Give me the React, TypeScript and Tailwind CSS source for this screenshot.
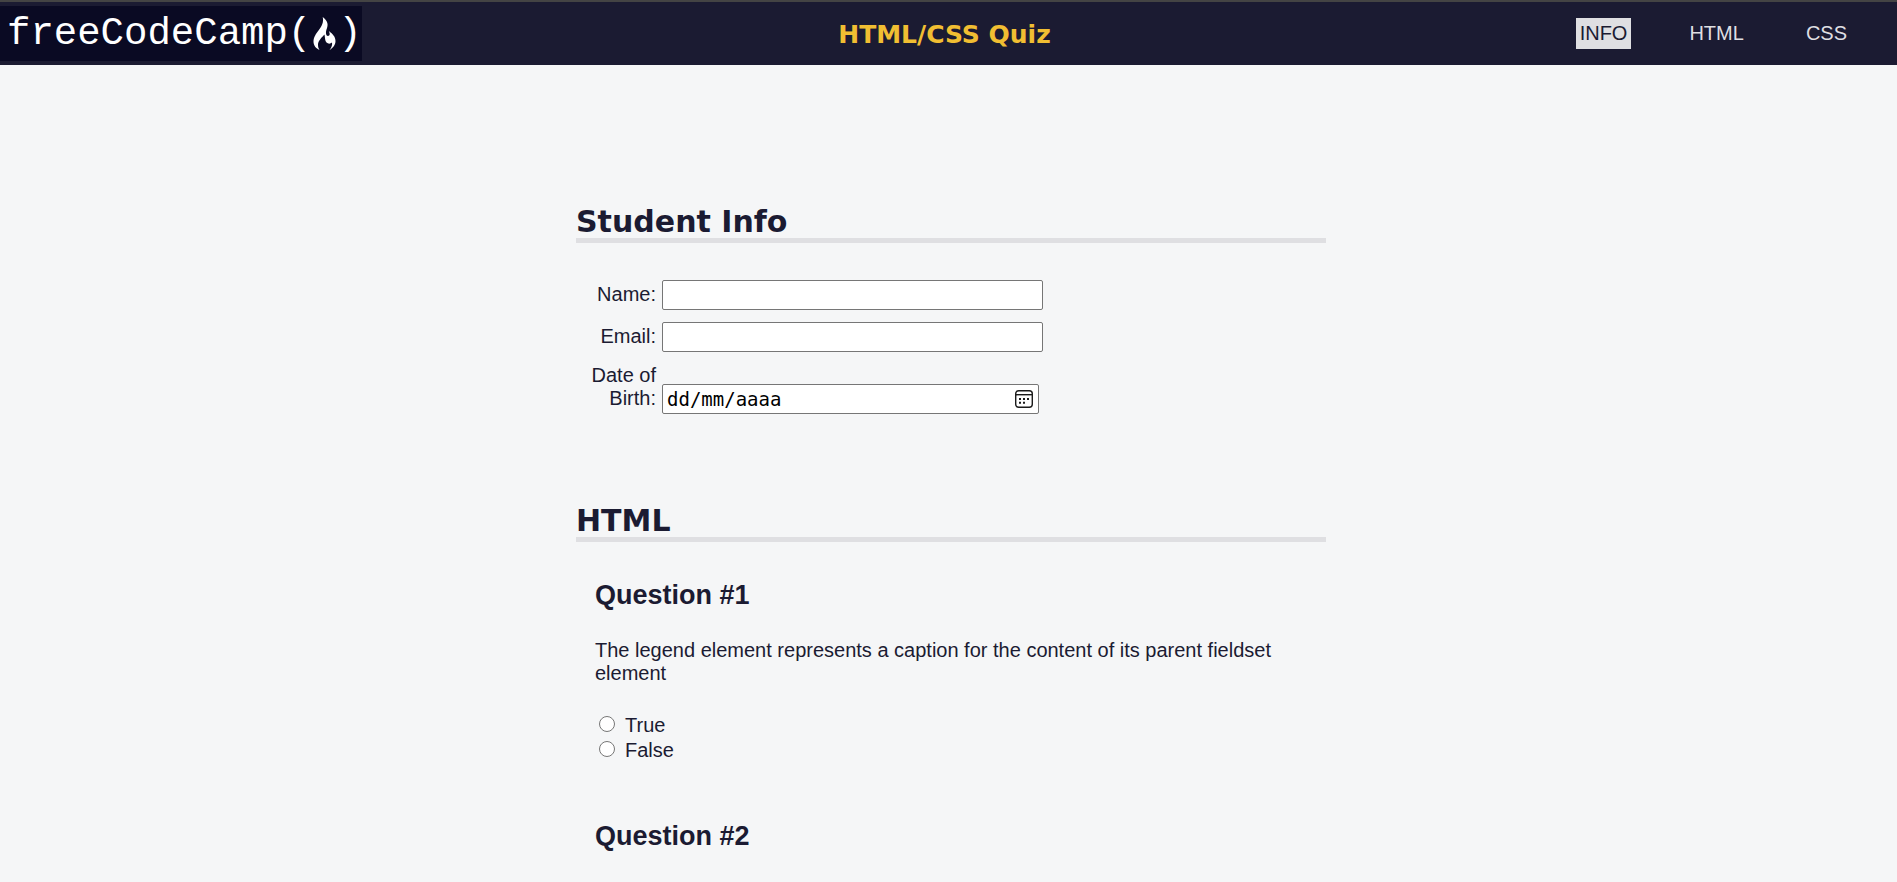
import type { ReactNode } from 'react';

const navItems = ['INFO', 'HTML', 'CSS'];

function Logo() {
  return (
    <a
      href="#home"
      aria-label="freeCodeCamp"
      className="flex h-[55px] w-[362px] items-center bg-[#0a0a23] pl-[7px] font-['Liberation_Mono',monospace] text-[39px] leading-[50px] text-white"
    >
      <span>freeCodeCamp</span>
      <span>(</span>
      <svg viewBox="0 0 23 33" className="mx-0.5 h-[33px] w-[23px] shrink-0" fill="currentColor" aria-hidden="true">
        <path d="M9.700 0C15 4 15.500 7.500 13.500 12.500C12.500 15.500 13 19 15 19C17 18.800 17.300 16.800 15.800 14C20 17 22.500 20 22.500 24C22.500 28 20 31 16.500 33C18.500 30.500 19.500 28 19 25.500C17.500 27 15 27 13.500 25.500C11.800 23.500 12.200 21 11.500 17.500C9 20 5 24 5 27.500C5 30 5.500 31.500 6.500 33C3 31.500 0.500 28.500 0.500 24.500C0.500 20 3 17 5.500 13.500C8.500 9.500 11 5.500 9.700 0Z" />
      </svg>
      <span>)</span>
    </a>
  );
}

function Section({ id, title, children }: { id: string; title: string; children: ReactNode }) {
  return (
    <section id={id} aria-labelledby={`${id}-title`}>
      <h2
        id={`${id}-title`}
        className="border-b-[5px] border-[#dfdfe2] font-['DejaVu_Sans',sans-serif] text-[30px] leading-8 font-bold"
      >
        {title}
      </h2>
      {children}
    </section>
  );
}

function Field({ id, label, children }: { id: string; label: string; children: ReactNode }) {
  return (
    <div className="flex items-end gap-1.5">
      <label htmlFor={id} className="w-20 pb-1 text-right">
        {label}
      </label>
      {children}
    </div>
  );
}

function CalendarIcon() {
  return (
    <svg viewBox="0 0 18 18" className="size-[18px]" fill="none" stroke="#1b1b1b" strokeWidth="1.400" aria-hidden="true">
      <rect x="0.700" y="0.700" width="16.600" height="16.600" rx="3" />
      <path d="M1 4.700h16" />
      <path d="M4 9h2M8 9h2M12 9h2M4 12.800h2M8 12.800h2" strokeWidth="2" />
    </svg>
  );
}

function Question({ number, text }: { number: number; text?: string }) {
  const name = `question-${number}`;
  return (
    <article>
      <h3 className="text-[27px] leading-[31px] font-bold">Question #{number}</h3>
      {text && (
        <fieldset className="mt-7">
          <legend>{text}</legend>
          <div className="pt-7 leading-[25px]">
            {['True', 'False'].map((answer) => (
              <label key={answer} className="flex items-center gap-2.5">
                <input type="radio" name={name} value={answer} className="mb-1 ml-1 size-4" />
                {answer}
              </label>
            ))}
          </div>
        </fieldset>
      )}
    </article>
  );
}

export default function App() {
  return (
    <div className="min-h-screen bg-[#f5f6f7] font-['Liberation_Sans',Arial,sans-serif] text-[20px] leading-[23px] text-[#1b1b32]">
      <header className="grid grid-cols-[1fr_auto_1fr] items-center border-t-2 border-[#444444] bg-[#1b1b32] pt-1 pb-1">
        <Logo />
        <h1 className="pt-0.5 pr-2 font-['DejaVu_Sans',sans-serif] text-[25px] leading-8 font-bold text-[#f1be32]">
          HTML/CSS Quiz
        </h1>
        <nav className="pr-[46px]">
          <ul className="flex justify-end gap-[54px]">
            {navItems.map((item) => (
              <li key={item}>
                <a
                  href={`#${item.toLowerCase()}`}
                  className={
                    item === 'INFO'
                      ? 'block bg-[#dfdfe2] p-1 text-[#1b1b32]'
                      : 'block p-1 text-[#dfdfe2]'
                  }
                >
                  {item}
                </a>
              </li>
            ))}
          </ul>
        </nav>
      </header>

      <main className="pl-[5px]">
        <form className="mx-auto flex max-w-[750px] flex-col gap-[91px] pt-[141px]">
          <Section id="info" title="Student Info">
            <div className="mt-[37px] flex flex-col gap-3">
              <Field id="name" label="Name:">
                <input id="name" type="text" className="h-[30px] w-[381px] rounded-xs border border-[#767676] bg-white px-1" />
              </Field>
              <Field id="email" label="Email:">
                <input id="email" type="email" className="h-[30px] w-[381px] rounded-xs border border-[#767676] bg-white px-1" />
              </Field>
              <Field id="birth" label="Date of Birth:">
                <div className="flex h-[30px] w-[377px] items-center rounded-xs border border-[#767676] bg-white pr-[5px] pl-1">
                  <input
                    id="birth"
                    type="text"
                    placeholder="dd/mm/aaaa"
                    className="min-w-0 flex-1 font-['DejaVu_Sans_Mono',monospace] text-[19px] leading-6 placeholder:text-black"
                  />
                  <button type="button" aria-label="Open calendar">
                    <CalendarIcon />
                  </button>
                </div>
              </Field>
            </div>
          </Section>

          <Section id="html" title="HTML">
            <div className="mt-[38px] flex flex-col gap-[58px] px-[19px]">
              <Question
                number={1}
                text="The legend element represents a caption for the content of its parent fieldset element"
              />
              <Question number={2} />
            </div>
          </Section>
        </form>
      </main>
    </div>
  );
}
